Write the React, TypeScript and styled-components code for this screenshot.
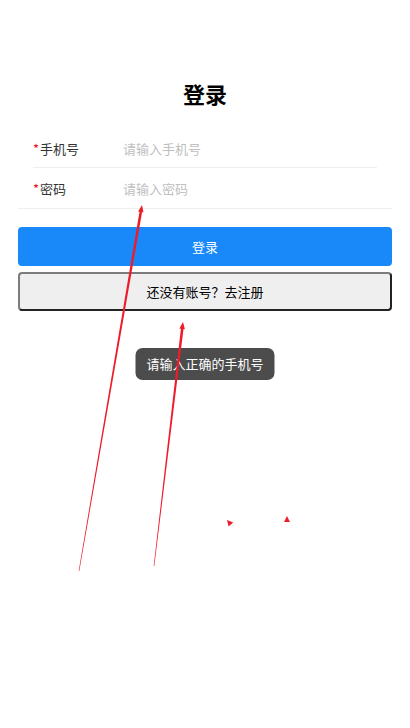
import styled, { createGlobalStyle } from "styled-components";
import { ReactElement } from "react";

const GlobalStyle = createGlobalStyle`
  html, body {
    margin: 0;
    padding: 0;
    background: #fff;
    font-family: "Noto Sans CJK SC", "Noto Sans", sans-serif;
  }
`;

const Page = styled.div`
  position: relative;
  width: 410px;
  height: 728px;
  overflow: hidden;
  background: #fff;
`;

const Title = styled.h1`
  margin: 0;
  padding-top: 77px;
  height: 32px;
  line-height: 32px;
  text-align: center;
  font-size: 22px;
  font-weight: bold;
  color: #000;
`;

const Form = styled.div`
  margin: 19px 18px 0;
  border-bottom: 1px solid #efefef;
`;

const Row = styled.div<{ $inset?: boolean }>`
  position: relative;
  display: flex;
  align-items: center;
  height: 40px;
  padding-left: 15px;
  font-size: 13px;

  &:after {
    content: ${(p) => (p.$inset ? '""' : "none")};
    position: absolute;
    left: 15px;
    right: 15px;
    bottom: 0;
    height: 1px;
    background: #efefef;
  }
`;

const Label = styled.label`
  width: 90px;
  color: #333;

  &:before {
    content: "*";
    color: #ee0a24;
    margin-right: 1px;
  }
`;

const Input = styled.input`
  flex: 1;
  border: none;
  outline: none;
  padding: 0;
  font-size: 13px;
  font-family: inherit;
  color: #333;
  background: transparent;

  &::placeholder {
    color: #c0c0c0;
  }
`;

const Actions = styled.div`
  display: flex;
  flex-direction: column;
  gap: 6px;
  margin: 18px 18px 0;
`;

const PrimaryButton = styled.button`
  height: 39px;
  border: none;
  border-radius: 4px;
  background: #1989fa;
  color: #fff;
  font-size: 13px;
  font-family: inherit;
`;

const PlainButton = styled.button`
  height: 39px;
  border: 2px solid;
  border-color: #7c7c7c #222 #222 #7c7c7c;
  border-radius: 4px;
  background: #efefef;
  color: #000;
  font-size: 13px;
  font-family: inherit;
`;

const Toast = styled.div`
  position: absolute;
  left: 50%;
  top: 348px;
  transform: translateX(-50%);
  height: 32px;
  line-height: 32px;
  padding: 0 11px;
  border-radius: 7px;
  background: rgba(0, 0, 0, 0.7);
  color: #fff;
  font-size: 13px;
  white-space: nowrap;
`;

const Overlay = styled.svg`
  position: absolute;
  left: 0;
  top: 0;
  pointer-events: none;
`;

type Pt = [number, number];

const arrowPoints = (from: Pt, to: Pt, w0: number, w1: number, head: number, headW: number): string => {
  const dx = to[0] - from[0];
  const dy = to[1] - from[1];
  const len = Math.hypot(dx, dy);
  const ux = dx / len;
  const uy = dy / len;
  const nx = -uy;
  const ny = ux;
  const bx = to[0] - ux * head;
  const by = to[1] - uy * head;
  const pts: Pt[] = [
    [from[0] + (nx * w0) / 2, from[1] + (ny * w0) / 2],
    [bx + (nx * w1) / 2, by + (ny * w1) / 2],
    [bx + (nx * headW) / 2, by + (ny * headW) / 2],
    to,
    [bx - (nx * headW) / 2, by - (ny * headW) / 2],
    [bx - (nx * w1) / 2, by - (ny * w1) / 2],
    [from[0] - (nx * w0) / 2, from[1] - (ny * w0) / 2],
  ];
  return pts.map((p) => `${p[0].toFixed(1)},${p[1].toFixed(1)}`).join(" ");
};

const Arrows = (): ReactElement => (
  <Overlay width="410" height="728" viewBox="0 0 410 728">
    <g fill="#ee1c2a">
      <polygon points={arrowPoints([79, 571], [142, 205], 0.6, 2.6, 7, 5.5)} />
      <polygon points={arrowPoints([154, 566], [183, 322], 0.6, 2.6, 7, 5.5)} />
      <polygon points={arrowPoints([233, 527], [227, 520], 0, 0, 6, 6)} />
      <polygon points={arrowPoints([287, 524], [287, 516], 0, 0, 6, 6)} />
    </g>
  </Overlay>
);

export default function App(): ReactElement {
  return (
    <Page>
      <GlobalStyle />
      <Title>登录</Title>
      <Form>
        <Row $inset>
          <Label>手机号</Label>
          <Input placeholder="请输入手机号" />
        </Row>
        <Row>
          <Label>密码</Label>
          <Input type="password" placeholder="请输入密码" />
        </Row>
      </Form>
      <Actions>
        <PrimaryButton>登录</PrimaryButton>
        <PlainButton>还没有账号？去注册</PlainButton>
      </Actions>
      <Toast>请输入正确的手机号</Toast>
      <Arrows />
    </Page>
  );
}
